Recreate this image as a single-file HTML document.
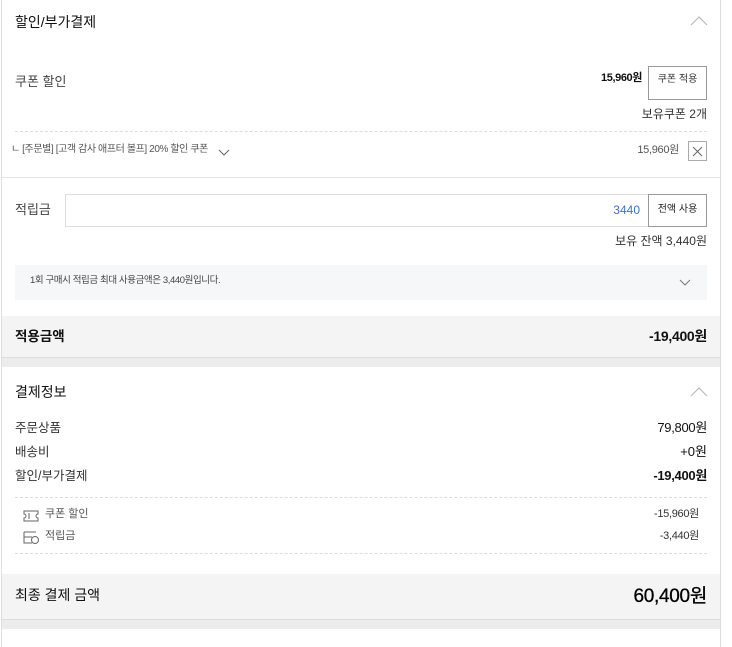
<!DOCTYPE html>
<html><head><meta charset="utf-8"><style>
*{margin:0;padding:0;box-sizing:border-box}
body{width:732px;height:647px;background:#fff;font-family:"Liberation Sans","Noto Sans CJK KR",sans-serif;color:#222;position:relative;overflow:hidden}
.p{position:absolute}
.panel{position:absolute;left:1px;top:0;width:720px;height:647px;border-left:1px solid #ddd;border-right:1px solid #ddd}
.t{position:absolute;white-space:nowrap;line-height:1}
.dash{position:absolute;left:15px;width:692px;border-top:1px dashed #ddd}
</style></head><body>
<div class="panel"></div>
<div class="t" style="left:15px;top:15px;font-size:14px;color:#111">할인/부가결제</div>
<svg class="p" style="left:690px;top:15px" width="18" height="11"><path d="M1 10 L9 2 L17 10" fill="none" stroke="#bbb" stroke-width="1.2"/></svg>

<div class="t" style="left:15px;top:75px;font-size:13px;color:#444">쿠폰 할인</div>
<div class="t" style="right:90px;top:73px;font-size:11px;font-weight:bold;color:#111;letter-spacing:-0.4px">15,960원</div>
<div class="p" style="left:648px;top:66px;width:59px;height:34px;border:1px solid #999;font-size:10px;text-align:center;padding-top:3px;color:#333">쿠폰 적용</div>
<div class="t" style="right:25px;top:108px;font-size:12px;color:#333">보유쿠폰 2개</div>
<div class="dash" style="top:131px"></div>
<div class="t" style="left:11px;top:145px;font-size:10px;color:#555;letter-spacing:-0.4px">ㄴ [주문별] [고객 감사 애프터 볼프] 20% 할인 쿠폰</div>
<svg class="p" style="left:218px;top:149px" width="12" height="8"><path d="M1 1 L6 6 L11 1" fill="none" stroke="#666" stroke-width="1"/></svg>
<div class="t" style="right:53px;top:145px;font-size:11px;color:#555;letter-spacing:-0.3px">15,960원</div>
<div class="p" style="left:688px;top:141px;width:19px;height:20px;border:1px solid #aaa"></div>
<svg class="p" style="left:692px;top:146px" width="11" height="11"><path d="M1 1 L10 10 M10 1 L1 10" stroke="#666" stroke-width="1"/></svg>
<div class="p" style="left:2px;top:177px;width:718px;border-top:1px solid #e5e5e5"></div>

<div class="t" style="left:15px;top:203px;font-size:13px;color:#444">적립금</div>
<div class="p" style="left:65px;top:194px;width:584px;height:33px;border:1px solid #ddd"></div>
<div class="t" style="right:92px;top:204px;font-size:12px;color:#3b6fe0">3440</div>
<div class="p" style="left:648px;top:194px;width:59px;height:33px;border:1px solid #999;font-size:10px;text-align:center;padding-top:10px;line-height:1;color:#222">전액 사용</div>
<div class="t" style="right:25px;top:235px;font-size:12px;color:#333">보유 잔액 3,440원</div>
<div class="p" style="left:15px;top:265px;width:692px;height:35px;background:#f6f7f8"></div>
<div class="t" style="left:30px;top:276px;font-size:9.5px;color:#444;letter-spacing:-0.4px">1회 구매시 적립금 최대 사용금액은 3,440원입니다.</div>
<svg class="p" style="left:679px;top:279px" width="12" height="7"><path d="M1 1 L6 6 L11 1" fill="none" stroke="#777" stroke-width="1"/></svg>

<div class="p" style="left:2px;top:316px;width:718px;height:42px;background:#f4f4f4;border-bottom:1px solid #ddd"></div>
<div class="p" style="left:2px;top:358px;width:718px;height:9px;background:#ececec"></div>
<div class="t" style="left:15px;top:330px;font-size:13.5px;font-weight:bold;color:#111">적용금액</div>
<div class="t" style="right:25px;top:329px;font-size:14px;font-weight:bold;color:#111;letter-spacing:-0.3px">-19,400원</div>

<div class="t" style="left:15px;top:385px;font-size:14px;color:#111">결제정보</div>
<svg class="p" style="left:690px;top:386px" width="18" height="11"><path d="M1 10 L9 2 L17 10" fill="none" stroke="#bbb" stroke-width="1.2"/></svg>
<div class="t" style="left:15px;top:422px;font-size:12.5px;color:#333">주문상품</div>
<div class="t" style="right:25px;top:421px;font-size:13px;color:#111;letter-spacing:-0.3px">79,800원</div>
<div class="t" style="left:15px;top:446px;font-size:12.5px;color:#333">배송비</div>
<div class="t" style="right:25px;top:445px;font-size:13px;color:#111">+0원</div>
<div class="t" style="left:15px;top:470px;font-size:12.5px;color:#333">할인/부가결제</div>
<div class="t" style="right:25px;top:469px;font-size:13px;font-weight:bold;color:#111;letter-spacing:-0.3px">-19,400원</div>
<div class="dash" style="top:497px"></div>
<svg class="p" style="left:23px;top:510px" width="16" height="12"><path d="M1 1 H15 V4 A2 2 0 0 0 15 8 V11 H1 V8 A2 2 0 0 0 1 4 Z M6 3 V9" fill="none" stroke="#666" stroke-width="1"/></svg>
<div class="t" style="left:45px;top:509px;font-size:11px;color:#555">쿠폰 할인</div>
<div class="t" style="right:33px;top:509px;font-size:11px;color:#333;letter-spacing:-0.3px">-15,960원</div>
<svg class="p" style="left:23px;top:531px" width="17" height="14"><path d="M1 1 H13 M1 1 V12 H9 M1 6 H9" fill="none" stroke="#666" stroke-width="1"/><circle cx="12" cy="9" r="3.5" fill="none" stroke="#666" stroke-width="1"/></svg>
<div class="t" style="left:45px;top:531px;font-size:11px;color:#555">적립금</div>
<div class="t" style="right:33px;top:531px;font-size:11px;color:#333;letter-spacing:-0.3px">-3,440원</div>
<div class="dash" style="top:553px"></div>

<div class="p" style="left:2px;top:574px;width:718px;height:46px;background:#f4f4f4;border-bottom:1px solid #ddd"></div>
<div class="p" style="left:2px;top:620px;width:718px;height:9px;background:#ececec"></div>
<div class="t" style="left:15px;top:588px;font-size:14px;color:#111">최종 결제 금액</div>
<div class="t" style="right:25px;top:587px;font-size:19px;color:#000;letter-spacing:-0.3px;-webkit-text-stroke:0.3px #000">60,400원</div>
</body></html>
